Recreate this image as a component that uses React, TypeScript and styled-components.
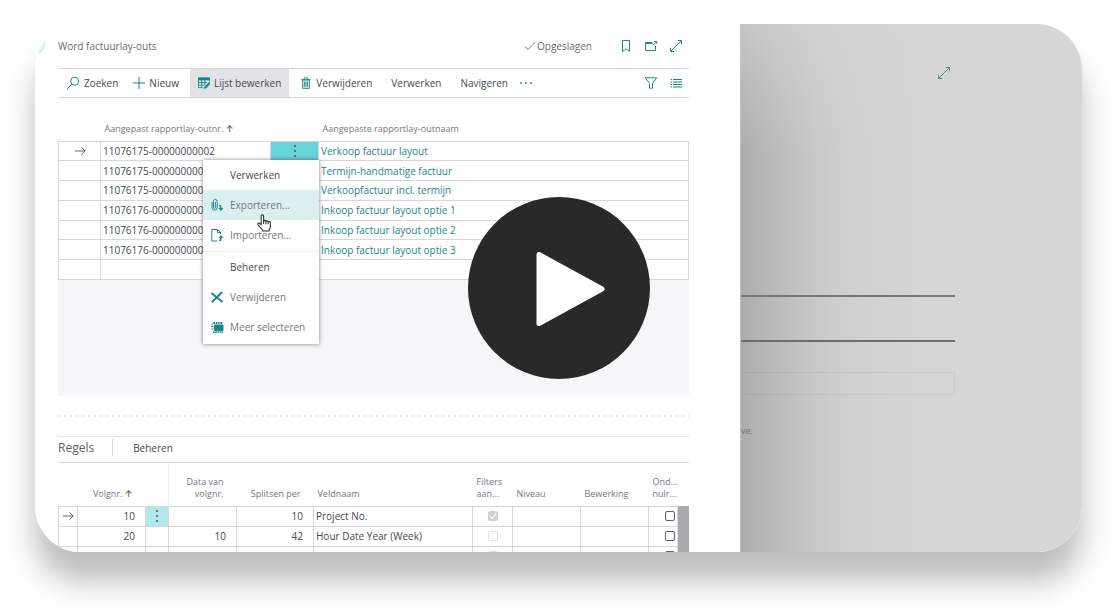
import React from 'react';
import styled, { createGlobalStyle } from 'styled-components';

const teal = '#1b868a';
const line = '#d5d7d9';

const GlobalStyle = createGlobalStyle`
  * { box-sizing: border-box; }
  body {
    margin: 0;
    background: #fff;
    color: #45494d;
    font: 10px/14px 'Open Sans', 'Noto Sans', sans-serif;
  }
  button { font: inherit; color: inherit; background: none; border: 0; padding: 0; cursor: pointer; }
  svg { display: block; flex: none; }
`;

const Page = styled.main`
  padding: 24px 38px 57px 35px;
  overflow: hidden;
`;

const VideoCard = styled.section`
  position: relative;
  display: grid;
  grid-template-columns: 705fr 342fr;
  aspect-ratio: 1047 / 528;
  border-radius: 46px;
  box-shadow: 0 30px 30px #bebebe;
`;

const Clip = styled.div`
  display: grid;
  grid-column: 1 / -1;
  grid-template-columns: subgrid;
  min-height: 0;
  border-radius: inherit;
  overflow: hidden;
  background: #fff;
`;

const Window = styled.div`
  min-width: 0;
  min-height: 0;
  padding: 0 51px 0 23px;
  background: radial-gradient(circle at 0 20px, #d8f0f0 10px, #fff 11px);
`;

const TitleBar = styled.header`
  display: flex;
  align-items: center;
  height: 44px;
  color: #686c71;
`;

const Title = styled.h1`
  margin: 0;
  flex: 1;
  font-size: 10px;
  font-weight: 400;
`;

const Saved = styled.span`
  display: flex;
  align-items: center;
  gap: 1px;
  margin-right: 27px;
`;

const IconGroup = styled.div`
  display: flex;
  gap: 11px;
  margin-right: 6px;
  color: ${teal};
`;

const Toolbar = styled.nav`
  display: flex;
  align-items: center;
  gap: 3px;
  height: 30px;
  border-top: 1px solid ${line};
  border-bottom: 1px solid ${line};
`;

const ToolButton = styled.button<{ $active?: boolean; $compact?: boolean }>`
  display: flex;
  align-items: center;
  gap: 4px;
  height: 28px;
  padding: 0 ${(p) => (p.$compact ? 4 : 8)}px 0 8px;
  white-space: nowrap;
  background: ${(p) => (p.$active ? '#e2e3e5' : 'transparent')};
  svg { color: ${teal}; }
`;

const MoreButton = styled.button`
  color: ${teal};
`;

const Spacer = styled.div`
  flex: 1;
`;

const Grid = styled.table`
  width: 100%;
  table-layout: fixed;
  border-collapse: collapse;
  line-height: 14px;
`;

const HeadCell = styled.th<{ $align?: string; $divided?: boolean }>`
  padding: 0 ${(p) => (p.$align === 'right' ? 13 : 4)}px 6px 4px;
  border-right: ${(p) => (p.$divided ? '1px solid #f0f1f2' : '0')};
  color: #74787d;
  font-size: 9px;
  font-weight: 400;
  line-height: 12px;
  text-align: ${(p) => p.$align || 'left'};
  vertical-align: bottom;
  white-space: nowrap;
`;

const SortMark = styled.span`
  color: #45494d;
  font-family: Inter, sans-serif;
  font-weight: 500;
`;

const Cell = styled.td<{ $align?: string; $fill?: string }>`
  position: relative;
  height: 20px;
  padding: 0 2px;
  border: 1px solid ${line};
  background: ${(p) => p.$fill || 'transparent'};
  text-align: ${(p) => p.$align || 'left'};
  white-space: nowrap;
`;

const NumberCell = styled(Cell)`
  padding-right: 10px;
  text-align: right;
`;

const ReportGrid = styled(Grid)`
  height: 182px;
  ${HeadCell} { height: 43px; }
  ${Cell} { height: 19px; }
`;

const RowLink = styled.a`
  color: ${teal};
  text-decoration: none;
`;

const CellButton = styled.button`
  display: flex;
  align-items: center;
  justify-content: center;
  width: 100%;
`;

const EmptyArea = styled.div`
  height: 116px;
  background: #f4f6f8;
`;

const Splitter = styled.div`
  height: 2px;
  margin: 19px 0;
  background: repeating-linear-gradient(90deg, #e1e2e3 0 2px, transparent 2px 6px);
`;

const Menu = styled.div`
  position: absolute;
  z-index: 2;
  top: 18px;
  right: -1px;
  width: 116px;
  padding-bottom: 2px;
  background: #fff;
  box-shadow: 0 0 4px rgba(0, 0, 0, 0.5);
`;

const MenuHeading = styled.div`
  padding-left: 27px;
  line-height: 30px;
  text-align: left;
`;

const MenuItem = styled.button<{ $hover?: boolean }>`
  display: flex;
  align-items: center;
  gap: 6px;
  width: 100%;
  height: 30px;
  padding-left: 7px;
  color: #74787d;
  background: ${(p) => (p.$hover ? '#daf0f0' : 'transparent')};
  svg { color: ${teal}; }
`;

const MenuRule = styled.div`
  height: 1px;
  margin-top: 1px;
  background: #eceeee;
`;

const Pointer = styled.svg`
  position: absolute;
  z-index: 3;
  top: 54px;
  left: 54px;
`;

const LinesBar = styled.div`
  display: flex;
  align-items: center;
  height: 27px;
  padding-bottom: 4px;
  border-top: 1px solid #e5e6e8;
  border-bottom: 1px solid ${line};
`;

const LinesTitle = styled.h2`
  margin: 0;
  padding-right: 18px;
  color: #5e6368;
  font-size: 12px;
  font-weight: 500;
`;

const LinesAction = styled.button`
  height: 17px;
  padding-left: 20px;
  border-left: 1px solid ${line};
`;

const LinesArea = styled.div`
  display: flex;
`;

const LinesGrid = styled(Grid)`
  flex: 1;
  width: 0;
  ${HeadCell} { height: 43px; }
`;

const Scrollbar = styled.div`
  width: 11px;
  margin-top: 43px;
  background: #a9aaac;
`;

const Check = styled.input`
  appearance: none;
  display: block;
  width: 10px;
  height: 10px;
  margin: 0 0 0 auto;
  border: 1px solid #5c6064;
  border-radius: 2px;
  &:disabled {
    margin-right: auto;
    border-color: #dcdddf;
  }
  &:checked {
    border-color: #cfd0d1;
    background: #cfd0d1;
  }
`;

const CheckWrap = styled.label`
  display: grid;
  > * { grid-area: 1 / 1; }
  > svg { place-self: center; color: #fff; }
`;

const Backdrop = styled.div`
  min-width: 0;
  padding: 42px 127px 0 0;
  border-left: 1px solid #c4c4c4;
  background:
    linear-gradient(180deg, rgba(214, 214, 214, 0.6), rgba(214, 214, 214, 0) 130px),
    linear-gradient(90deg, #acacac, #bababa 32px, #c8c8c8 74px, #d1d1d1 120px, #d6d6d6 190px);
`;

const BackdropIcon = styled.button`
  display: block;
  margin: 0 4px 0 auto;
  color: #3f9194;
`;

const Rule = styled.div<{ $tone: string }>`
  height: 2px;
  margin-bottom: 43px;
  background: ${(p) => p.$tone};
`;

const RuleStack = styled.div`
  padding-top: 215px;
`;

const FaintField = styled.div`
  height: 23px;
  margin-top: -13px;
  border: 1px solid rgba(0, 0, 0, 0.05);
  border-left: 0;
`;

const Caption = styled.p`
  margin: 29px 0 0;
  color: #6f7178;
  font-size: 9px;
`;

const PlayButton = styled.button`
  position: absolute;
  z-index: 4;
  top: 50%;
  left: 50%;
  display: grid;
  place-items: center;
  width: 182px;
  height: 182px;
  transform: translate(-50%, -50%);
  border-radius: 50%;
  background: #292929;
`;

type IconProps = { children: React.ReactNode; size?: number };

const Icon = ({ children, size = 14 }: IconProps) => (
  <svg width={size} height={size} viewBox="0 0 14 14" fill="none" stroke="currentColor" strokeWidth="1" aria-hidden="true">
    {children}
  </svg>
);

const SearchIcon = () => <Icon><circle cx="8.7" cy="5.2" r="4" /><path d="M5.9 8.1 1 13" /></Icon>;
const PlusIcon = () => <Icon size={12}><path d="M7 0v14M0 7h14" strokeWidth="1.2" /></Icon>;
const EditListIcon = () => (
  <Icon size={12}>
    <path d="M.6 1h12.800v2.400H.6z" fill="currentColor" />
    <path d="M.6 3.400v9h5.400M.6 6.400h10M.6 9.400h7M4.300 3.400v9M8 3.400v6M13.400 3.400v1.600" />
    <path d="M13.300 5.800 8 11.200l-1 2.500 2.600-.9 4.600-5z" fill="currentColor" strokeWidth=".6" />
  </Icon>
);
const TrashIcon = () => (
  <Icon size={12}>
    <path d="M3 3.500h8v9.800H3z" fill="#cfe9ea" />
    <path d="M1.500 3h11M5 3V1h4v2M5.200 5.500v6M7 5.500v6M8.800 5.500v6" />
  </Icon>
);
const FilterIcon = () => <Icon><path d="M1.200 1.800h11.600L8.500 7.300v4.900h-3V7.300z" /></Icon>;
const ListIcon = () => <Icon><path d="M1.500 3.500H3M4 3.500h9M1.500 6H3M4 6h9M1.500 8.500H3M4 8.500h9M1.500 11H3M4 11h9" /></Icon>;
const BookmarkIcon = () => <Icon><path d="M3.500 1.500h7v11L7 9.800l-3.500 2.700z" /></Icon>;
const PopOutIcon = () => (
  <Icon><path d="M8.500 3.500h-7v8h10V7M1.500 4.500h7M9 6l3.500-3.200M10.300 2.500h2.500v2.300" /></Icon>
);
const ExpandIcon = () => <Icon><path d="M2 12 12 2M8.800 1.500h3.700v3.700M5.200 12.500H1.500V8.800" /></Icon>;
const CheckIcon = () => <Icon size={12}><path d="M1 7.500 4.800 11 13 2.500" /></Icon>;
const ArrowIcon = () => <Icon size={12}><path d="M1 7h12M8.800 2.800 13 7l-4.200 4.200" /></Icon>;
const DotsIcon = ({ vertical }: { vertical?: boolean }) => (
  <Icon>
    <g fill="currentColor" stroke="none" transform={vertical ? 'rotate(90 7 7)' : undefined}>
      <circle cx="2" cy="7" r=".9" />
      <circle cx="7" cy="7" r=".9" />
      <circle cx="12" cy="7" r=".9" />
    </g>
  </Icon>
);
const ExportIcon = () => (
  <Icon>
    <path d="M2 4v5.500a2.600 2.600 0 0 0 5.200 0V3.300a1.900 1.900 0 0 0-3.800 0v5.900a1 1 0 0 0 2 0V4" />
    <path d="M9 7.500h1.800v3M9 10.300l1.900 2.200 1.900-2.200z" fill="currentColor" />
  </Icon>
);
const ImportIcon = () => (
  <Icon>
    <path d="M7.500 13H1.800V1.500h5.700l3 3V6M7.500 1.500v3h3" />
    <path d="M9 12.500h2V9.500M9.300 9.500 11 7.600l1.700 1.900z" fill="currentColor" />
  </Icon>
);
const CrossIcon = () => <Icon><path d="M1.500 3 12.500 12M12.200 2 1.800 12.200" strokeWidth="1.9" /></Icon>;
const SelectMoreIcon = () => (
  <Icon>
    <path d="M1.500 4h2M1 6.500h2.500M1.500 9h2" />
    <path d="M3.500 3h9.500M3 12.200h10" strokeWidth="1.800" strokeDasharray="1.600 .7" />
    <path d="M4.500 5h8.500v5.500H4.500z" fill="currentColor" />
  </Icon>
);

const reports = [
  ['11076175-00000000002', 'Verkoop factuur layout'],
  ['11076175-00000000003', 'Termijn-handmatige factuur'],
  ['11076175-00000000004', 'Verkoopfactuur incl. termijn'],
  ['11076176-00000000001', 'Inkoop factuur layout optie 1'],
  ['11076176-00000000002', 'Inkoop factuur layout optie 2'],
  ['11076176-00000000003', 'Inkoop factuur layout optie 3'],
  ['', ''],
];

const lines = [
  { nr: '10', data: '', split: '10', name: 'Project No.', filtered: true },
  { nr: '20', data: '10', split: '42', name: 'Hour Date Year (Week)', filtered: false },
  { nr: '', data: '', split: '', name: '', filtered: false },
];

const ContextMenu = () => (
  <Menu role="menu">
    <MenuHeading>Verwerken</MenuHeading>
    <MenuItem role="menuitem" $hover><ExportIcon />Exporteren...</MenuItem>
    <MenuItem role="menuitem"><ImportIcon />Importeren...</MenuItem>
    <MenuRule />
    <MenuHeading>Beheren</MenuHeading>
    <MenuItem role="menuitem"><CrossIcon />Verwijderen</MenuItem>
    <MenuItem role="menuitem"><SelectMoreIcon />Meer selecteren</MenuItem>
    <Pointer width="15" height="18" viewBox="0 0 15 18" fill="#fff" stroke="#333" strokeWidth="1.1" strokeLinejoin="round" aria-hidden="true">
      <path d="M4.2 10.8V2.2c0-1.8 2.4-1.8 2.4 0v5c.2-1.2 2.2-1 2.3.3.4-1 2.2-.8 2.3.5.5-.9 2.2-.6 2.2.8v3.4c0 1.8-.8 2.6-1.2 3.8v1H5.600v-1C4.500 14.500 2.800 12.800 1 10.800c-.8-1.300.8-2.300 1.800-1.300z" />
      <path d="M6.600 7v3M8.900 7.500v2.700M11.200 8v2.300" />
    </Pointer>
  </Menu>
);

export default function App() {
  return (
    <Page>
      <GlobalStyle />
      <VideoCard aria-label="Video">
        <Clip>
          <Window>
            <TitleBar>
              <Title>Word factuurlay-outs</Title>
              <Saved><CheckIcon />Opgeslagen</Saved>
              <IconGroup>
                <button aria-label="Bladwijzer"><BookmarkIcon /></button>
                <button aria-label="Nieuw venster"><PopOutIcon /></button>
                <button aria-label="Vergroten"><ExpandIcon /></button>
              </IconGroup>
            </TitleBar>
            <Toolbar>
              <ToolButton $compact><SearchIcon />Zoeken</ToolButton>
              <ToolButton><PlusIcon />Nieuw</ToolButton>
              <ToolButton $active><EditListIcon />Lijst bewerken</ToolButton>
              <ToolButton><TrashIcon />Verwijderen</ToolButton>
              <ToolButton>Verwerken</ToolButton>
              <ToolButton>Navigeren</ToolButton>
              <MoreButton aria-label="Meer"><DotsIcon /></MoreButton>
              <Spacer />
              <IconGroup>
                <button aria-label="Filter"><FilterIcon /></button>
                <button aria-label="Lijst"><ListIcon /></button>
              </IconGroup>
            </Toolbar>
            <ReportGrid>
              <colgroup>
                <col style={{ width: 42 }} />
                <col style={{ width: 170 }} />
                <col style={{ width: 48 }} />
                <col />
              </colgroup>
              <thead>
                <tr>
                  <HeadCell />
                  <HeadCell colSpan={2}>Aangepast rapportlay-outnr. <SortMark>↑</SortMark></HeadCell>
                  <HeadCell>Aangepaste rapportlay-outnaam</HeadCell>
                </tr>
              </thead>
              <tbody>
                {reports.map(([nr, name], i) => (
                  <tr key={i}>
                    <Cell>{i === 0 && <CellButton aria-label="Rij openen"><ArrowIcon /></CellButton>}</Cell>
                    <Cell colSpan={i === 0 ? 1 : 2}>{nr}</Cell>
                    {i === 0 && (
                      <Cell $fill="#68d4d9">
                        <CellButton aria-label="Opties"><DotsIcon vertical /></CellButton>
                        <ContextMenu />
                      </Cell>
                    )}
                    <Cell>{name && <RowLink href="#">{name}</RowLink>}</Cell>
                  </tr>
                ))}
              </tbody>
            </ReportGrid>
            <EmptyArea />
            <Splitter />
            <LinesBar>
              <LinesTitle>Regels</LinesTitle>
              <LinesAction>Beheren</LinesAction>
            </LinesBar>
            <LinesArea>
              <LinesGrid>
                <colgroup>
                  {[19, 68, 23, 68, 77].map((w, i) => <col key={i} style={{ width: w }} />)}
                  <col />
                  {[40, 68, 68, 29].map((w, i) => <col key={i} style={{ width: w }} />)}
                </colgroup>
                <thead>
                  <tr>
                    <HeadCell />
                    <HeadCell $align="right">Volgnr. <SortMark>↑</SortMark></HeadCell>
                    <HeadCell $divided />
                    <HeadCell $align="right">Data van<br />volgnr.</HeadCell>
                    <HeadCell $align="right">Splitsen per</HeadCell>
                    <HeadCell>Veldnaam</HeadCell>
                    <HeadCell>Filters<br />aan...</HeadCell>
                    <HeadCell>Niveau</HeadCell>
                    <HeadCell>Bewerking</HeadCell>
                    <HeadCell>Ond...<br />nulr...</HeadCell>
                  </tr>
                </thead>
                <tbody>
                  {lines.map((row, i) => (
                    <tr key={i}>
                      <Cell>{i === 0 && <CellButton aria-label="Regel openen"><ArrowIcon /></CellButton>}</Cell>
                      <NumberCell>{row.nr}</NumberCell>
                      <Cell $fill={i === 0 ? '#b1e8ec' : undefined}>
                        {i === 0 && <CellButton aria-label="Regelopties"><DotsIcon vertical /></CellButton>}
                      </Cell>
                      <NumberCell>{row.data}</NumberCell>
                      <NumberCell>{row.split}</NumberCell>
                      <Cell>{row.name}</Cell>
                      <Cell>
                        <CheckWrap>
                          <Check type="checkbox" aria-label="Filters aanwezig" disabled defaultChecked={row.filtered} />
                          {row.filtered && <Icon size={8}><path d="M1.500 7.500 5.500 11 12.500 3" strokeWidth="2" /></Icon>}
                        </CheckWrap>
                      </Cell>
                      <Cell />
                      <Cell />
                      <Cell><Check type="checkbox" aria-label="Onderdruk nulregel" /></Cell>
                    </tr>
                  ))}
                </tbody>
              </LinesGrid>
              <Scrollbar />
            </LinesArea>
          </Window>
          <Backdrop>
            <BackdropIcon aria-label="Vergroten"><ExpandIcon /></BackdropIcon>
            <RuleStack>
              <Rule $tone="#76767d" />
              <Rule $tone="#66706d" />
            </RuleStack>
            <FaintField />
            <Caption>ve.</Caption>
          </Backdrop>
        </Clip>
        <PlayButton aria-label="Video afspelen">
          <svg width="182" height="182" viewBox="0 0 182 182" aria-hidden="true">
            <path d="M71 57.500v69l63-34.500z" fill="#fff" stroke="#fff" strokeWidth="5" strokeLinejoin="round" />
          </svg>
        </PlayButton>
      </VideoCard>
    </Page>
  );
}
